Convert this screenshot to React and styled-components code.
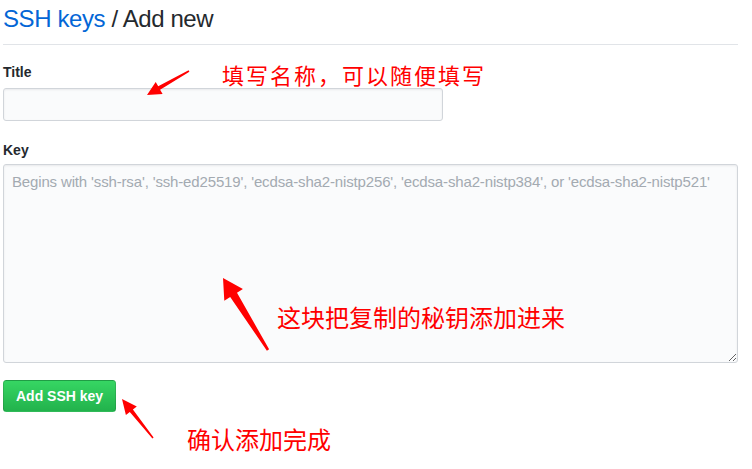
import React from 'react';
import styled, { createGlobalStyle } from 'styled-components';

const GlobalStyle = createGlobalStyle`
  body {
    margin: 0;
    background: #fff;
    font-family: "Liberation Sans", Arial, sans-serif;
    color: #24292e;
  }
`

const Page = styled.div`
  position: relative;
  box-sizing: border-box;
  width: 752px;
  height: 469px;
  padding: 4px 14px 0 3px;
  overflow: hidden;
`

const Subhead = styled.div`
  display: flex;
  align-items: center;
  padding-bottom: 10px;
  margin-bottom: 17px;
  border-bottom: 1px solid #e1e4e8;
`

const Heading = styled.h2`
  margin: 0;
  font-size: 24px;
  font-weight: 400;
  line-height: 30px;
  letter-spacing: -0.4px;
  color: #24292e;
`

const Crumb = styled.a`
  color: #0366d6;
  text-decoration: none;
`

const Field = styled.div`
  margin-bottom: ${p => p.$after}px;
`

const Label = styled.label`
  display: block;
  font-size: 14px;
  font-weight: 700;
  line-height: 20px;
  margin-bottom: ${p => p.$gap}px;
`

const TextInput = styled.input`
  display: block;
  box-sizing: border-box;
  width: 440px;
  height: 33px;
  padding: 6px 8px;
  font-size: 14px;
  font-family: inherit;
  background: #fafbfc;
  border: 1px solid #d1d5da;
  border-radius: 3px;
  box-shadow: inset 0 1px 2px rgba(27, 31, 35, 0.075);
  outline: none;
`

const KeyArea = styled.textarea`
  display: block;
  box-sizing: border-box;
  width: 735px;
  height: 199px;
  padding: 7px 8px;
  font-size: 15px;
  line-height: 20px;
  font-family: inherit;
  background: #fafbfc;
  border: 1px solid #d1d5da;
  border-radius: 3px;
  box-shadow: inset 0 1px 2px rgba(27, 31, 35, 0.075);
  outline: none;
  resize: vertical;

  &::placeholder {
    color: #a3aab1;
    letter-spacing: -0.15px;
  }
`

const PrimaryButton = styled.button`
  display: block;
  box-sizing: border-box;
  height: 32px;
  padding: 0 12px;
  font-family: inherit;
  font-size: 14px;
  font-weight: 700;
  color: #fff;
  background-image: linear-gradient(-180deg, #36d663 0%, #22b24c 100%);
  border: 1px solid rgba(27, 31, 35, 0.15);
  border-radius: 3.5px;
  cursor: pointer;
`

const Note = styled.div`
  position: absolute;
  left: ${p => p.$x}px;
  top: ${p => p.$y}px;
  font-family: "Noto Sans CJK SC", sans-serif;
  font-size: ${p => p.$size}px;
  letter-spacing: ${p => p.$spacing || 0}px;
  line-height: 1;
  color: #ff0000;
  white-space: nowrap;
`

const Overlay = styled.svg`
  position: absolute;
  left: 0;
  top: 0;
  pointer-events: none;
`

// tapered red marker arrow, tail -> tip
function arrowPoints([tx, ty], [px, py], head, half, w0, w1) {
  const len = Math.hypot(px - tx, py - ty);
  const dx = (px - tx) / len;
  const dy = (py - ty) / len;
  const nx = -dy;
  const ny = dx;
  const bx = px - dx * head;
  const by = py - dy * head;
  const pts = [
    [tx + nx * w0 / 2, ty + ny * w0 / 2],
    [bx + nx * w1 / 2, by + ny * w1 / 2],
    [bx + nx * half, by + ny * half],
    [px, py],
    [bx - nx * half, by - ny * half],
    [bx - nx * w1 / 2, by - ny * w1 / 2],
    [tx - nx * w0 / 2, ty - ny * w0 / 2],
  ];
  return pts.map(p => p.map(v => v.toFixed(1)).join(',')).join(' ');
}

const arrows = [
  { tail: [189, 71], tip: [147, 95], head: 14, half: 7, w0: 1.5, w1: 4 },
  { tail: [268, 350], tip: [223, 278], head: 20, half: 11, w0: 2.5, w1: 8 },
  { tail: [153, 438], tip: [122, 399], head: 15, half: 7, w0: 1.5, w1: 4 },
];

export default function App() {
  return (
    <Page>
      <GlobalStyle />
      <Subhead>
        <Heading>
          <Crumb href="#">SSH keys</Crumb> / Add new
        </Heading>
      </Subhead>

      <Field $after={19}>
        <Label $gap={6}>Title</Label>
        <TextInput type="text" />
      </Field>

      <Field $after={17}>
        <Label $gap={4}>Key</Label>
        <KeyArea placeholder="Begins with 'ssh-rsa', 'ssh-ed25519', 'ecdsa-sha2-nistp256', 'ecdsa-sha2-nistp384', or 'ecdsa-sha2-nistp521'" />
      </Field>

      <PrimaryButton type="submit">Add SSH key</PrimaryButton>

      <Note $x={222} $y={63} $size={22} $spacing={2}>填写名称，可以随便填写</Note>
      <Note $x={277} $y={305} $size={24}>这块把复制的秘钥添加进来</Note>
      <Note $x={187} $y={427} $size={24}>确认添加完成</Note>

      <Overlay width="752" height="469" viewBox="0 0 752 469">
        {arrows.map((a, i) => (
          <polygon
            key={i}
            points={arrowPoints(a.tail, a.tip, a.head, a.half, a.w0, a.w1)}
            fill="#ff0000"
            strokeLinejoin="round"
          />
        ))}
      </Overlay>
    </Page>
  );
}
